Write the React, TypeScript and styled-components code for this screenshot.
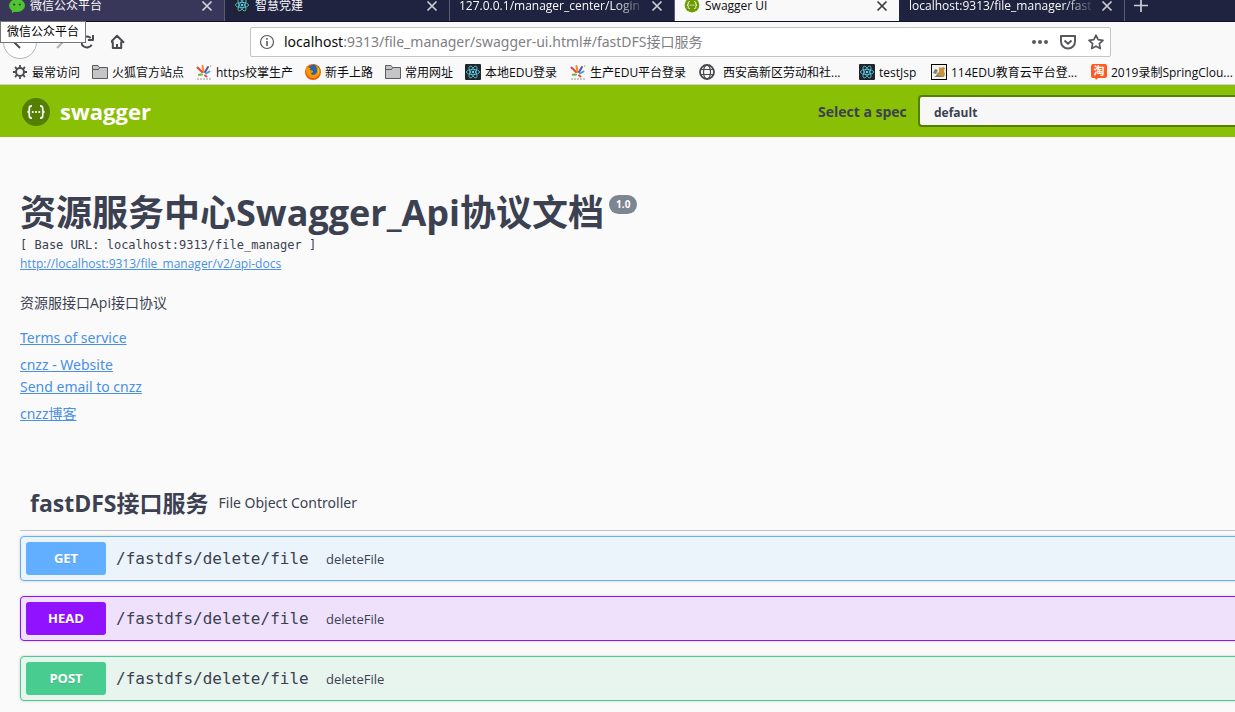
import React from "react";
import styled, { createGlobalStyle } from "styled-components";

const UI = '"Open Sans", "Noto Sans CJK SC", sans-serif';
const WIDE = '"Noto Sans", "Noto Sans CJK SC", sans-serif';
const MONO = '"DejaVu Sans Mono", "Noto Sans CJK SC", monospace';
const INK = "#3b4151";

const GlobalStyle = createGlobalStyle`
  *, *::before, *::after { box-sizing: border-box; }
  html, body { margin: 0; overflow-x: hidden; background: #fafafa; }
  body { font-family: ${UI}; color: ${INK}; }
  button { font-family: inherit; border: 0; padding: 0; background: none; color: inherit; cursor: pointer; }
  svg { display: block; flex: none; }
`;

/* ---------- Browser chrome ---------- */

const Chrome = styled.header`
  position: relative;
  background: #f9f9fa;
  border-bottom: 1px solid #d0d0d2;
  color: #0c0c0d;
`;

const TabStrip = styled.div`
  display: flex;
  height: 22px;
  overflow: hidden;
  border-bottom: 1px solid #0f1126;
  background: #202340;
  color: #f9f9fa;
`;

const Tab = styled.div<{ $state?: "active" | "hover" }>`
  flex: none;
  display: flex;
  align-items: flex-start;
  gap: 5px;
  width: 225px;
  height: 22px;
  padding: 0 11px 0 9px;
  border-right: 1px solid ${(p) => (p.$state === "active" ? "#202340" : "#5a5b75")};
  background: ${(p) => (p.$state === "active" ? "#f9f9fa" : p.$state === "hover" ? "#38375a" : "transparent")};
  color: ${(p) => (p.$state === "active" ? "#0c0c0d" : "#f9f9fa")};
`;

const TabTitle = styled.span<{ $fade?: boolean }>`
  flex: 1;
  min-width: 0;
  overflow: hidden;
  white-space: nowrap;
  font-size: 12px;
  line-height: 12px;
  height: 16px;
  ${(p) => p.$fade && "mask-image: linear-gradient(to left, transparent, #000 32px);"}
`;

const TabButton = styled.button`
  width: 12px;
  height: 12px;
  opacity: 0.8;
`;

const NewTab = styled.button`
  width: 32px;
  height: 12px;
  display: flex;
  justify-content: center;
  opacity: 0.8;
`;

const Toolbar = styled.div`
  display: flex;
  align-items: center;
  height: 40px;
  padding: 0 124px 0 3px;
  color: #4a4a4f;
`;

const NavButtons = styled.div`
  flex: none;
  display: flex;
  align-items: center;
  gap: 14px;
  width: 247px;
`;

const BackButton = styled.button`
  display: flex;
  align-items: center;
  justify-content: center;
  width: 34px;
  height: 34px;
  border: 1px solid #b5b5b8;
  border-radius: 50%;
  background: #fff;
`;

const IconButton = styled.button<{ $faded?: boolean }>`
  width: 16px;
  height: 16px;
  opacity: ${(p) => (p.$faded ? 0.4 : 1)};
`;

const PageButtons = styled.div`
  display: flex;
  gap: 16px;
  margin-left: -2px;
`;

const UrlBar = styled.div`
  flex: 1;
  display: flex;
  align-items: center;
  gap: 12px;
  height: 30px;
  padding: 0 6px 0 8px;
  border: 1px solid #c4c4c6;
  border-radius: 2px;
  background: #fff;
  color: #5a5a5e;
`;

const UrlText = styled.div`
  flex: 1;
  margin-left: -3px;
  font-family: ${WIDE};
  font-size: 14px;
  line-height: 20px;
  white-space: nowrap;
  color: #808084;
`;

const Host = styled.span`
  color: #0c0c0d;
`;

const Bookmarks = styled.nav`
  display: flex;
  gap: 12px;
  height: 22px;
  padding-left: 12px;
  overflow: hidden;
`;

const Bookmark = styled.a`
  flex: none;
  display: flex;
  align-items: center;
  gap: 4px;
  height: 20px;
  color: #0c0c0d;
  text-decoration: none;
`;

const BookmarkLabel = styled.span<{ $width: number; $indent?: boolean }>`
  width: ${(p) => p.$width}px;
  padding: 1px 0 0 ${(p) => (p.$indent ? 4 : 0)}px;
  font-size: 12px;
  line-height: 20px;
  white-space: nowrap;
`;

const Tooltip = styled.div`
  position: absolute;
  top: 21px;
  left: 0;
  height: 22px;
  padding: 0 6px;
  border: 1px solid #767676;
  background: #fff;
  color: #000;
  font-size: 12px;
  line-height: 20px;
`;

/* ---------- Swagger page ---------- */

const Topbar = styled.div`
  display: flex;
  align-items: center;
  justify-content: space-between;
  height: 52px;
  padding-left: 20px;
  overflow: hidden;
  background: #89bf04;
`;

const Brand = styled.a`
  display: flex;
  align-items: center;
  gap: 9px;
  color: #fff;
  font-size: 22px;
  line-height: 30px;
  font-weight: 700;
  text-decoration: none;
`;

const SpecPicker = styled.label`
  display: flex;
  align-items: center;
  justify-content: space-between;
  width: 417px;
  font-size: 14px;
  font-weight: 700;
`;

const SpecSelect = styled.select`
  appearance: none;
  flex: none;
  width: 321px;
  height: 32px;
  margin-right: -4px;
  padding: 2px 14px 0;
  border: 2px solid #547f00;
  border-radius: 4px;
  background: #f7f7f7;
  color: ${INK};
  font-family: ${UI};
  font-size: 12px;
  font-weight: 700;
`;

const Page = styled.main`
  padding: 52px 0 12px 20px;
  overflow: hidden;
`;

const Title = styled.h1`
  display: flex;
  align-items: flex-start;
  gap: 5px;
  margin: 0;
  font-size: 36px;
  line-height: 48px;
  font-weight: 700;
  white-space: nowrap;
`;

const Version = styled.small`
  margin-top: 6px;
  padding: 0 7px;
  border-radius: 10px;
  background: #7d8492;
  color: #fff;
  font-size: 10px;
  line-height: 19px;
`;

const BaseUrl = styled.pre`
  margin: 0;
  font-family: ${MONO};
  font-size: 12px;
  line-height: 16px;
`;

const Link = styled.a<{ $small?: boolean }>`
  color: #4990e2;
  font-family: ${(p) => (p.$small ? UI : WIDE)};
  font-size: ${(p) => (p.$small ? 12 : 14)}px;
  line-height: 22px;
`;

const Description = styled.p`
  margin: 16px 0 12px;
  font-size: 14px;
  line-height: 24px;
`;

const LinkGroup = styled.div`
  display: flex;
  flex-direction: column;
  align-items: flex-start;
  margin-bottom: 5px;
`;

const TagHeading = styled.h2`
  display: flex;
  align-items: center;
  gap: 10px;
  height: 55px;
  margin: 51px 0 5px;
  padding: 0 10px;
  border-bottom: 1px solid rgba(59, 65, 81, 0.3);
  font-size: 23px;
  line-height: 32px;
`;

const TagNote = styled.small`
  font-family: ${WIDE};
  font-size: 14px;
  font-weight: 400;
`;

const Operations = styled.div`
  display: flex;
  flex-direction: column;
  gap: 15px;
  margin-right: -5px;
`;

const Operation = styled.button<{ $color: string; $tint: string }>`
  display: flex;
  align-items: center;
  height: 45px;
  padding: 5px;
  border: 1px solid ${(p) => p.$color};
  border-radius: 4px;
  background: ${(p) => p.$tint};
  box-shadow: 0 0 3px rgba(0, 0, 0, 0.19);
  text-align: left;
`;

const Method = styled.span<{ $color: string }>`
  width: 80px;
  border-radius: 3px;
  background: ${(p) => p.$color};
  color: #fff;
  font-size: 13px;
  font-weight: 700;
  line-height: 33px;
  text-align: center;
  text-shadow: 0 1px 0 rgba(0, 0, 0, 0.1);
`;

const Path = styled.span`
  width: 220px;
  padding: 0 10px;
  font-family: ${MONO};
  font-size: 16px;
  white-space: nowrap;
`;

const Summary = styled.span`
  font-size: 13px;
`;

/* ---------- Icons ---------- */

const CloseIcon = () => (
  <svg width="12" height="12" viewBox="0 0 12 12" stroke="currentColor" strokeWidth="1.7" fill="none">
    <path d="M1.5 1.5l9 9M10.5 1.5l-9 9" />
  </svg>
);

const WeChatIcon = () => (
  <svg width="16" height="13" viewBox="0 3 16 13">
    <ellipse cx="8" cy="8.5" rx="8" ry="6.5" fill="#51c332" />
    <path d="M3 13v3l4-2z" fill="#51c332" />
    <circle cx="5.2" cy="7.5" r="1.1" fill="#23421c" />
    <circle cx="10.8" cy="7.5" r="1.1" fill="#23421c" />
  </svg>
);

const ReactIcon = ({ cropped }: { cropped?: boolean }) => (
  <svg width="16" height={cropped ? 13 : 16} viewBox={cropped ? "0 3 16 13" : "0 0 16 16"}>
    <rect width="16" height="16" rx="1" fill="#20242b" />
    <g fill="none" stroke="#5ccbe6" strokeWidth="0.8">
      <ellipse cx="8" cy="8" rx="6.6" ry="2.6" />
      <ellipse cx="8" cy="8" rx="6.6" ry="2.6" transform="rotate(60 8 8)" />
      <ellipse cx="8" cy="8" rx="6.6" ry="2.6" transform="rotate(120 8 8)" />
    </g>
    <circle cx="8" cy="8" r="1.3" fill="#5ccbe6" />
  </svg>
);

const Braces = () => (
  <>
    <path
      d="M10 7.800c-2.200 0-2.700.9-2.700 2.500v1.700c0 1.300-.5 2-1.900 2 1.400 0 1.900.7 1.900 2v1.700c0 1.600.5 2.500 2.700 2.500M18 7.800c2.200 0 2.700.9 2.700 2.500v1.700c0 1.300.5 2 1.900 2-1.400 0-1.900.7-1.900 2v1.700c0 1.600-.5 2.500-2.700 2.500"
      fill="none"
      stroke="#fff"
      strokeWidth="1.700"
    />
    <circle cx="10.700" cy="14" r="1.100" fill="#fff" />
    <circle cx="14" cy="14" r="1.100" fill="#fff" />
    <circle cx="17.300" cy="14" r="1.100" fill="#fff" />
  </>
);

const SwaggerTabIcon = () => (
  <svg width="16" height="13" viewBox="0 5 28 23">
    <circle cx="14" cy="14" r="13" fill="#6d9a00" />
    <Braces />
  </svg>
);

const SwaggerLogo = () => (
  <svg width="31" height="30" viewBox="-2 -2 31 30">
    <circle cx="14" cy="14" r="14" fill="#547f00" />
    <Braces />
  </svg>
);

const GearIcon = () => (
  <svg width="16" height="16" viewBox="0 0 16 16" fill="none" stroke="#4a4a4f">
    <circle cx="8" cy="8" r="4" strokeWidth="2" />
    <path
      d="M8 1v2.500M8 12.500V15M1 8h2.500M12.500 8H15M3 3l1.800 1.800M11.200 11.200L13 13M13 3l-1.800 1.800M4.800 11.200L3 13"
      strokeWidth="1.800"
    />
  </svg>
);

const FolderIcon = () => (
  <svg width="16" height="16" viewBox="0 0 16 16" stroke="#5c5c60" fill="#c5c5c8">
    <path d="M.5 14.500v-13h5.500l1.500 2h8v11z" />
    <path d="M.5 5.500h6l1-2" fill="none" />
  </svg>
);

const SparkIcon = () => (
  <svg width="16" height="16" viewBox="0 0 16 16" fill="none" strokeLinecap="round" strokeWidth="2">
    <path d="M7.500 8L6.500 2" stroke="#f28c28" />
    <path d="M6 8L1.500 3.500" stroke="#e8453c" />
    <path d="M9 8l3-5" stroke="#5d50a8" />
    <path d="M10 9.500l3.500-2" stroke="#3ba3d8" />
    <path d="M6 10.500L3 10.800" stroke="#67b82f" />
    <path d="M9 11.500l1.500 1" stroke="#e8453c" />
    <path d="M14.800 1.500v1" stroke="#8cc152" strokeWidth="1" />
    <path d="M1 15h14" stroke="#999" strokeWidth="1" strokeDasharray="2 1" strokeLinecap="butt" />
  </svg>
);

const FirefoxIcon = () => (
  <svg width="16" height="16" viewBox="0 0 16 16">
    <circle cx="8" cy="8" r="8" fill="#e66000" />
    <circle cx="9" cy="6.500" r="5.800" fill="#1f67b1" />
    <path d="M10 1c3 1 5 4 4.500 7.500S11 14 8 14 1 11 1 6c0-2 .5-3 1-4 .5 1.500 2 2 3.500 2L5 6c1 1 3 0 3 1.500S6 8.500 6 9.500s2 2 4 1 2.500-3 2-5.500S11 2 10 1z" fill="#ff9500" />
    <path d="M14 4c1 3 .5 6-1.500 7.500 1-3 1-5 .5-7z" fill="#ffcb00" />
  </svg>
);

const GlobeIcon = () => (
  <svg width="16" height="16" viewBox="0 0 16 16" fill="none" stroke="#4a4a4f" strokeWidth="1.200">
    <circle cx="8" cy="8" r="7" strokeWidth="1.800" />
    <ellipse cx="8" cy="8" rx="3.500" ry="7" />
    <path d="M2 5.500h12M2 10.500h12" />
  </svg>
);

const PictureIcon = () => (
  <svg width="16" height="16" viewBox="0 0 16 16">
    <rect x=".5" y=".5" width="15" height="15" fill="#f4f1e8" stroke="#000" />
    <path d="M5 12l1-3 2-1V3l2 1 2-1 2 1-1 3 1 3-1 3z" fill="#c6913c" />
    <path d="M2 9l2-4 3 1-2 4zM3 13l3-2 7 2z" fill="#6f7f88" />
  </svg>
);

const TaoIcon = () => (
  <svg width="16" height="16" viewBox="0 0 16 16">
    <path d="M2 0h12a2 2 0 012 2v10a2 2 0 01-2 2H7l-2 2-1-2H2a2 2 0 01-2-2V2a2 2 0 012-2z" fill="#ff5a1f" />
    <text x="8" y="11" textAnchor="middle" fontSize="11" fontWeight="700" fontFamily='"Noto Sans CJK SC", sans-serif' fill="#fff">
      淘
    </text>
  </svg>
);

const LineIcon = ({ d, width = 2 }: { d: string; width?: number }) => (
  <svg width="16" height="16" viewBox="0 0 16 16" fill="none" stroke="currentColor" strokeWidth={width} strokeLinejoin="round">
    <path d={d} />
  </svg>
);

const InfoIcon = () => (
  <svg width="16" height="16" viewBox="0 0 16 16" fill="none" stroke="currentColor">
    <circle cx="8" cy="8" r="6.500" strokeWidth="1.200" />
    <path d="M8 7v5M8 4v1.800" strokeWidth="1.600" />
  </svg>
);

const DotsIcon = () => (
  <svg width="16" height="16" viewBox="0 0 16 16" fill="currentColor">
    <circle cx="2" cy="8" r="2" />
    <circle cx="8" cy="8" r="2" />
    <circle cx="14" cy="8" r="2" />
  </svg>
);

/* ---------- Data ---------- */

type TabData = { title: string; icon?: React.ReactNode; state?: "active" | "hover"; fade?: boolean };

const tabs: TabData[] = [
  { title: "微信公众平台", icon: <WeChatIcon />, state: "hover" },
  { title: "智慧党建", icon: <ReactIcon cropped /> },
  { title: "127.0.0.1/manager_center/Login", fade: true },
  { title: "Swagger UI", icon: <SwaggerTabIcon />, state: "active" },
  { title: "localhost:9313/file_manager/fast", fade: true },
];

const bookmarks = [
  { label: "最常访问", width: 48, icon: <GearIcon /> },
  { label: "火狐官方站点", width: 72, icon: <FolderIcon /> },
  { label: "https校掌生产", width: 77, icon: <SparkIcon /> },
  { label: "新手上路", width: 48, icon: <FirefoxIcon /> },
  { label: "常用网址", width: 48, icon: <FolderIcon /> },
  { label: "本地EDU登录", width: 73, icon: <ReactIcon /> },
  { label: "生产EDU平台登录", width: 97, icon: <SparkIcon /> },
  { label: "西安高新区劳动和社...", width: 128, icon: <GlobeIcon />, indent: true },
  { label: "testJsp", width: 40, icon: <ReactIcon /> },
  { label: "114EDU教育云平台登...", width: 128, icon: <PictureIcon /> },
  { label: "2019录制SpringClou...", width: 128, icon: <TaoIcon /> },
];

const operations = [
  { method: "GET", color: "#61affe", tint: "#ebf3fb" },
  { method: "HEAD", color: "#9012fe", tint: "#efe1fb" },
  { method: "POST", color: "#49cc90", tint: "#e8f4ee" },
];

export default function App() {
  return (
    <>
      <GlobalStyle />
      <Chrome>
        <TabStrip>
          {tabs.map((t) => (
            <Tab key={t.title} $state={t.state}>
              {t.icon}
              <TabTitle $fade={t.fade}>{t.title}</TabTitle>
              <TabButton aria-label="Close tab">
                <CloseIcon />
              </TabButton>
            </Tab>
          ))}
          <NewTab aria-label="New tab">
            <svg width="14" height="12" viewBox="0 0 14 12" stroke="currentColor" strokeWidth="1.700">
              <path d="M0 5.500h14M7-1v13" />
            </svg>
          </NewTab>
        </TabStrip>
        <Toolbar>
          <NavButtons>
            <BackButton aria-label="Back">
              <LineIcon d="M8 2L2 8l6 6M2 8h13" />
            </BackButton>
            <IconButton aria-label="Forward" $faded>
              <LineIcon d="M6 2l6 6-6 6M12 8H0" />
            </IconButton>
            <IconButton aria-label="Reload">
              <LineIcon d="M10.700 10.700A5.500 5.500 0 119.700 4M12 1v5H7" />
            </IconButton>
            <IconButton aria-label="Home">
              <LineIcon d="M-1 8.800L6 1.800l7 7M1.800 7.500v6.500h8.400V7.500M6 14v-4" />
            </IconButton>
          </NavButtons>
          <UrlBar>
            <InfoIcon />
            <UrlText>
              <Host>localhost</Host>:9313/file_manager/swagger-ui.html#/fastDFS接口服务
            </UrlText>
            <IconButton aria-label="Page actions">
              <DotsIcon />
            </IconButton>
            <IconButton aria-label="Save to Pocket">
              <LineIcon d="M1 2h14v5.500a7 7 0 01-14 0zM4.500 6.500L8 9.800l3.500-3.300" />
            </IconButton>
            <IconButton aria-label="Bookmark this page">
              <LineIcon d="M8 1.200l2.100 4.500 4.900.6-3.600 3.400.9 4.900L8 12.200l-4.300 2.400.9-4.900L1 6.300l4.900-.6z" width={1.7} />
            </IconButton>
          </UrlBar>
        </Toolbar>
        <Bookmarks aria-label="Bookmarks">
          {bookmarks.map((b) => (
            <Bookmark key={b.label} href="#">
              {b.icon}
              <BookmarkLabel $width={b.width} $indent={b.indent}>
                {b.label}
              </BookmarkLabel>
            </Bookmark>
          ))}
        </Bookmarks>
        <Tooltip role="tooltip">微信公众平台</Tooltip>
      </Chrome>

      <Topbar>
        <Brand href="#">
          <SwaggerLogo />
          swagger
        </Brand>
        <SpecPicker>
          Select a spec
          <SpecSelect defaultValue="default">
            <option value="default">default</option>
          </SpecSelect>
        </SpecPicker>
      </Topbar>

      <Page>
        <Title>
          资源服务中心Swagger_Api协议文档
          <Version>1.0</Version>
        </Title>
        <BaseUrl>[ Base URL: localhost:9313/file_manager ]</BaseUrl>
        <LinkGroup>
          <Link $small href="#">
            http://localhost:9313/file_manager/v2/api-docs
          </Link>
        </LinkGroup>
        <Description>资源服接口Api接口协议</Description>
        <LinkGroup>
          <Link href="#">Terms of service</Link>
        </LinkGroup>
        <LinkGroup>
          <Link href="#">cnzz - Website</Link>
          <Link href="#">Send email to cnzz</Link>
        </LinkGroup>
        <LinkGroup>
          <Link href="#">cnzz博客</Link>
        </LinkGroup>

        <TagHeading>
          fastDFS接口服务
          <TagNote>File Object Controller</TagNote>
        </TagHeading>
        <Operations>
          {operations.map((o) => (
            <Operation key={o.method} $color={o.color} $tint={o.tint}>
              <Method $color={o.color}>{o.method}</Method>
              <Path>/fastdfs/delete/file</Path>
              <Summary>deleteFile</Summary>
            </Operation>
          ))}
        </Operations>
      </Page>
    </>
  );
}
